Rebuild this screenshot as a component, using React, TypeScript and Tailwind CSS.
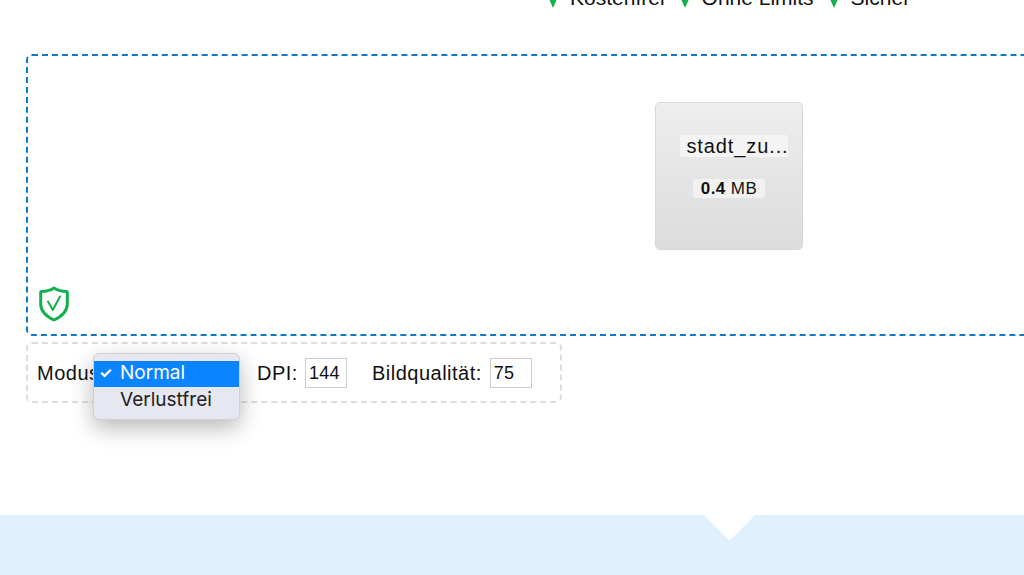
const sans = "font-['Liberation_Sans',Arial,sans-serif]";

function Shield() {
  return (
    <svg viewBox="0 0 30 36" className="h-[36px] w-[30px]" fill="none">
      <path d="M15 2 C19 4.500 23.500 5.500 27.500 5.500 C28 5.500 28.300 5.800 28.300 6.300 V18 C28.300 25.500 22.500 30.500 15 34 C7.500 30.500 1.700 25.500 1.700 18 V6.300 C1.700 5.800 2 5.500 2.500 5.500 C6.500 5.500 11 4.500 15 2 Z" stroke="#12b04e" strokeWidth="3" strokeLinejoin="round" />
      <path d="M9 15.500 L13.800 24 L21 10.500" stroke="#12b04e" strokeWidth="2" strokeLinecap="round" strokeLinejoin="round" />
    </svg>
  );
}

function Perk({ label }: { label: string }) {
  return (
    <span className="flex items-center gap-[13px]">
      <span className="mt-[10px] h-0 w-0 border-x-[4px] border-t-[9px] border-x-transparent border-t-[#12b04e]" />
      {label}
    </span>
  );
}

function NumberBox({ value }: { value: string }) {
  return (
    <span className="flex h-[30px] w-[42px] items-center border border-[#ccc] pl-[3px] pt-[1px] text-[18px] tracking-[0.3px]">{value}</span>
  );
}

function ModeMenu() {
  return (
    <div className="absolute left-[65px] top-[9px] z-10 h-[67px] w-[147px] overflow-hidden rounded-[6px] border border-[#cfd0d6] bg-[#e6e7f0] pt-[7px] font-['Inter',sans-serif] text-[19px] tracking-normal shadow-[0_8px_22px_rgba(0,0,0,0.28)]">
      <div className="flex h-[26px] items-center bg-[#0a84ff] pb-[1px] pl-[5px] text-white">
        <span className="w-[21px] text-[15px] font-bold">✓</span>
        Normal
      </div>
      <div className="flex h-[26px] items-center pl-[26px] text-[#222]">Verlustfrei</div>
    </div>
  );
}

export default function App() {
  return (
    <div className={`flex h-[575px] w-[1024px] flex-col overflow-hidden bg-white text-[#111] ${sans}`}>
      <div className="flex h-[54px] justify-start pl-[549px]">
        <div className="-mt-[14px] flex h-[24px] gap-[16px] text-[21px] leading-[24px]">
          <Perk label="Kostenfrei" />
          <Perk label="Ohne Limits" />
          <Perk label="Sicher" />
        </div>
      </div>

      <div className="ml-[26px] flex h-[282px] w-[1040px] shrink-0 flex-col rounded-[6px] border-2 border-dashed border-[#0b7bc9]">
        <div className="ml-[627px] mt-[46px] flex h-[148px] w-[148px] flex-col items-center rounded-[5px] border border-[#d8d8d8] bg-gradient-to-b from-[#eeeeee] to-[#dcdcdc]">
          <div className="mt-[32px] ml-[10px] flex h-[22px] w-[108px] items-center justify-center rounded-[2px] bg-[#f4f4f4] pl-[7px] text-[20px] tracking-[0.9px]">
            stadt_zu...
          </div>
          <div className="mt-[22px] flex h-[19px] w-[72px] items-center justify-center rounded-[2px] bg-[#f1f1f1] text-[17px] tracking-[0.4px]">
            <b>0.4</b>&nbsp;MB
          </div>
        </div>
        <div className="ml-[11px] mt-[36px]">
          <Shield />
        </div>
      </div>

      <div className="relative ml-[26px] mt-[6px] flex h-[61px] w-[536px] shrink-0 items-center rounded-[6px] border-2 border-dashed border-[#dddddd] pl-[9px] text-[20px] tracking-[0.5px]">
        <span className="w-[220px]">Modus:</span>
        <span className="mr-[7px]">DPI:</span>
        <NumberBox value="144" />
        <span className="ml-[25px] mr-[8px]">Bildqualität:</span>
        <NumberBox value="75" />
        <ModeMenu />
      </div>

      <div className="relative mt-[112px] h-[60px] shrink-0 overflow-hidden bg-[#e0f0fc]">
        <div className="absolute left-[711px] top-[-19px] h-[37px] w-[37px] rotate-45 bg-white" />
      </div>
    </div>
  );
}
